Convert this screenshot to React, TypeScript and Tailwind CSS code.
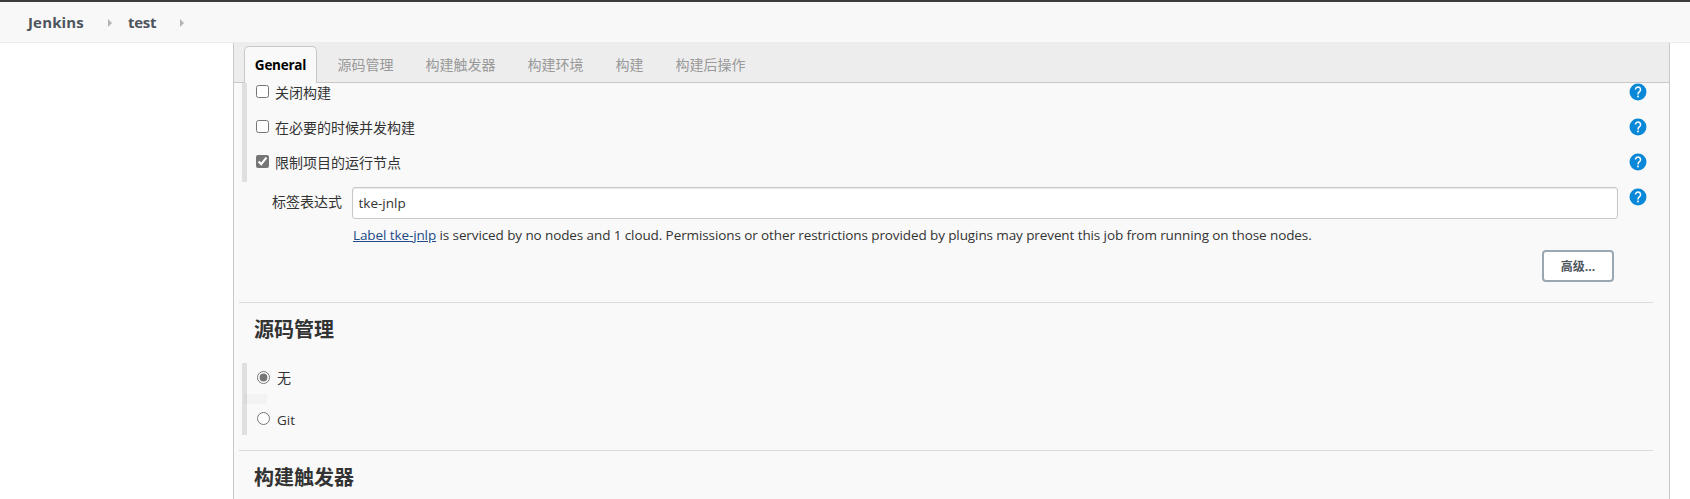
import type { ReactNode } from "react";

const tabs = [
  { label: "源码管理", cls: "ml-[20.5px]" },
  { label: "构建触发器", cls: "ml-[32px]" },
  { label: "构建环境", cls: "ml-[32px]" },
  { label: "构建", cls: "ml-[32px]" },
  { label: "构建后操作", cls: "ml-[32px]" },
];

function Arrow() {
  return (
    <svg width="4" height="8" viewBox="0 0 4 8" className="mt-[2px] block">
      <path d="M0 0L4 4L0 8Z" fill="#b4b4b4" />
    </svg>
  );
}

function Help() {
  return (
    <svg width="18" height="18" viewBox="0 0 24 24" className="block shrink-0">
      <circle cx="12" cy="12" r="11.3" fill="#0a88d8" />
      <path
        d="M8.6 8.6a3.4 3.4 0 1 1 5.7 2.6c-1.3 1.1-2.3 1.7-2.3 4"
        fill="none"
        stroke="#fff"
        strokeWidth="2"
      />
      <rect x="10.9" y="16.8" width="2.2" height="2.3" fill="#fff" />
    </svg>
  );
}

function CheckRow({ label, checked = false }: { label: string; checked?: boolean }) {
  return (
    <div className="flex h-[35px] items-start">
      <label className="flex items-start">
        <input type="checkbox" defaultChecked={checked} className="mt-[2px] h-[13px] w-[13px] accent-[#767676]" />
        <span className="ml-[6px] block leading-[20px]">{label}</span>
      </label>
      <div className="ml-auto mr-[22px]">
        <Help />
      </div>
    </div>
  );
}

function Heading({ children }: { children: ReactNode }) {
  return (
    <h2 className="ml-[5px] mr-[16px] h-[60px] shrink-0 border-t border-[#dcdcdc] pl-[15px] pt-[13px] text-[20px] font-bold leading-[28px]">
      {children}
    </h2>
  );
}

export default function App() {
  return (
    <div className="flex h-[499px] w-[1690px] flex-col overflow-hidden bg-white font-['Open_Sans','Noto_Sans_CJK_SC',sans-serif] text-[14px] text-[#333]">
      <header className="flex h-[43px] shrink-0 items-center border-b border-t-2 border-b-[#ececec] border-t-[#3d3b3c] bg-[#f8f8f8] pl-[28px] text-[15px] font-bold text-[#4d545d]">
        <span className="w-[80px] tracking-[0.15px]">Jenkins</span>
        <Arrow />
        <span className="ml-[16px] w-[52px] tracking-[-0.3px]">test</span>
        <Arrow />
      </header>
      <main className="ml-[233px] flex min-h-0 w-[1437px] flex-1 flex-col border-x border-[#c8c8c8] bg-[#f9f9f9]">
        <nav className="flex h-[40px] shrink-0 border-b border-[#c8c8c8] bg-[#ededed] text-[#999]">
          <div className="ml-[10px] mt-[3px] flex h-[37px] w-[73px] items-center justify-center rounded-t-[5px] border border-b-0 border-[#c8c8c8] bg-[#f9f9f9] text-[13.5px] font-bold tracking-[-0.25px] text-black">
            General
          </div>
          {tabs.map((t) => (
            <div key={t.label} className={`${t.cls} flex h-[43px] items-center`}>
              {t.label}
            </div>
          ))}
        </nav>

        <section className="flex h-[104px] shrink-0 pl-[8px]">
          <div className="h-[99px] w-[5px] bg-[#e0e0e0]" />
          <div className="ml-[9px] flex-1">
            <CheckRow label="关闭构建" />
            <CheckRow label="在必要的时候并发构建" />
            <CheckRow label="限制项目的运行节点" checked />
          </div>
        </section>

        <section className="flex h-[115px] shrink-0 pl-[38px]">
          <span className="w-[80px] pt-[5px] leading-[20px]">标签表达式</span>
          <div className="w-[1266px]">
            <input
              defaultValue="tke-jnlp"
              className="block h-[32px] w-full rounded-[3px] border border-[#c8c8c8] bg-white px-[5.5px] pb-px text-[13.5px] shadow-[inset_0_1px_1px_rgba(0,0,0,0.08)]"
            />
            <p className="mt-[6px] whitespace-nowrap pl-[1px] text-[13.5px] leading-[20px] tracking-[-0.1px]">
              <a className="text-[#204a87] underline">Label tke-jnlp</a> is serviced by no nodes and 1 cloud. Permissions
              or other restrictions provided by plugins may prevent this job from running on those nodes.
            </p>
            <div className="mt-[5px] flex justify-end pr-[4px]">
              <button className="h-[32px] w-[72px] rounded-[4px] border-2 border-[#9aa7b0] bg-white pt-[2px] text-[12px] font-bold text-[#4d545d]">
                高级...
              </button>
            </div>
          </div>
          <div className="ml-[11px] mt-px">
            <Help />
          </div>
        </section>

        <Heading>源码管理</Heading>
        <section className="mt-px flex h-[87px] shrink-0 pl-[8px]">
          <div className="relative h-[72px] w-[5px] bg-[#e0e0e0]">
            <div className="absolute left-[2px] top-[31px] h-[10px] w-[23px] bg-black/[0.025]" />
          </div>
          <div className="ml-[10px] flex flex-col pt-[4px]">
            <label className="flex h-[41px] items-start">
              <input type="radio" name="scm" defaultChecked className="mt-[4px] h-[13px] w-[13px] accent-[#767676]" />
              <span className="ml-[7px] mt-px leading-[20px]">无</span>
            </label>
            <label className="flex h-[41px] items-start">
              <input type="radio" name="scm" className="mt-[4px] h-[13px] w-[13px] accent-[#767676]" />
              <span className="ml-[7px] mt-[2px] text-[13.5px] leading-[20px]">Git</span>
            </label>
          </div>
        </section>
        <Heading>构建触发器</Heading>
      </main>
    </div>
  );
}
